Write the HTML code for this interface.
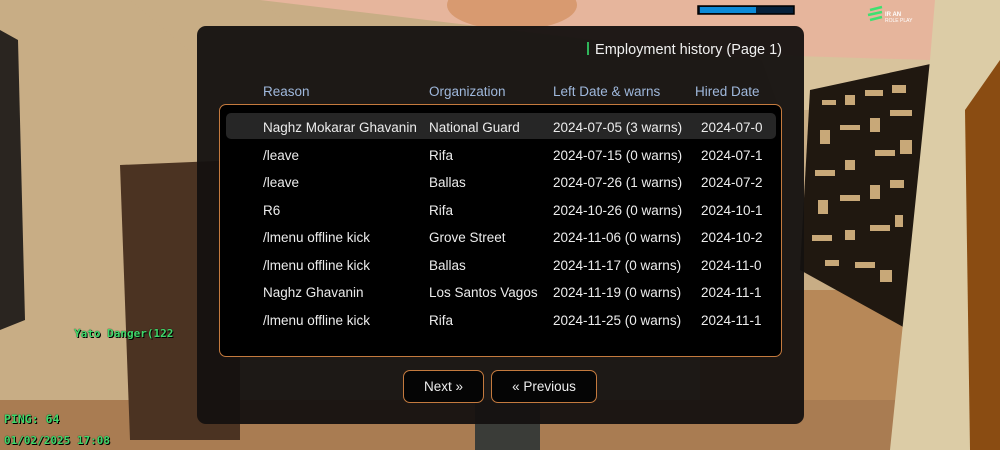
<!DOCTYPE html>
<html><head><style>
*{margin:0;padding:0;box-sizing:border-box}
body{width:1000px;height:450px;overflow:hidden;position:relative;font-family:"Liberation Sans",sans-serif;background:#c8ad85}
.a{position:absolute}
.panel{left:197px;top:26px;width:607px;height:398px;background:rgba(20,17,16,0.95);border-radius:9px}
.title{right:22px;top:16px;color:#f0f0f0;font-size:14.5px;font-weight:500}
.title b{display:inline-block;width:2px;height:13px;background:#2fb55a;margin-right:6px;vertical-align:-1px}
.h{top:58px;color:#9fb8dc;font-size:13.5px}
.box{left:22px;top:78px;width:563px;height:253px;background:#000;border:1.5px solid #c47a3e;border-radius:7px;overflow:hidden}
.hl{left:6px;top:8px;width:550px;height:26px;background:#262626;border-radius:5px}
.r{color:#ececec;font-size:13.5px;white-space:nowrap}
.btn{top:344px;height:33px;border:1.5px solid #c47a3e;border-radius:7px;background:#050505;color:#eee;font-size:13.5px;text-align:center;line-height:31px}
.g{color:#3fd86a;font-family:"DejaVu Sans Mono",monospace;font-weight:bold;font-size:11px;text-shadow:0 0 1px #000,1px 1px 0 #000}
</style></head><body>
<svg class="a" style="left:0;top:0" width="1000" height="450">
<polygon points="260,0 1000,0 1000,70 880,90 760,60" fill="#e6b59c"/>
<polygon points="130,0 260,0 330,60 200,60" fill="#c8ad85"/>
<polygon points="760,55 930,60 930,110 780,110" fill="#d8c39c"/>
<rect x="700" y="290" width="240" height="160" fill="#b78858"/>
<rect x="0" y="400" width="1000" height="50" fill="#a97c52"/>
<polygon points="0,30 18,40 25,320 0,330" fill="#2a2520"/>
<polygon points="120,165 240,160 240,440 130,440" fill="#4b3322"/>
<polygon points="810,90 935,63 905,328 800,270" fill="#201810"/>
<g fill="#c8a878">
<rect x="822" y="100" width="14" height="5"/><rect x="845" y="95" width="10" height="10"/><rect x="865" y="90" width="18" height="6"/><rect x="892" y="85" width="14" height="8"/>
<rect x="820" y="130" width="10" height="14"/><rect x="840" y="125" width="20" height="5"/><rect x="870" y="118" width="10" height="14"/><rect x="890" y="110" width="22" height="6"/>
<rect x="815" y="170" width="20" height="6"/><rect x="845" y="160" width="10" height="10"/><rect x="875" y="150" width="20" height="6"/><rect x="900" y="140" width="12" height="14"/>
<rect x="818" y="200" width="10" height="14"/><rect x="840" y="195" width="20" height="6"/><rect x="870" y="185" width="10" height="14"/><rect x="890" y="180" width="14" height="8"/>
<rect x="812" y="235" width="20" height="6"/><rect x="845" y="230" width="10" height="10"/><rect x="870" y="225" width="20" height="6"/><rect x="895" y="215" width="8" height="12"/>
<rect x="825" y="260" width="14" height="6"/><rect x="855" y="262" width="20" height="6"/><rect x="880" y="270" width="12" height="12"/>
</g>
<polygon points="935,0 1000,0 1000,450 890,450 930,60" fill="#dccca6"/>
<polygon points="965,110 1000,60 1000,450 970,450" fill="#8a4c12"/>
<rect x="698" y="6" width="96" height="8" fill="#05203a" stroke="#000" stroke-width="1.5"/>
<rect x="700" y="7" width="56" height="6" fill="#0a8ad8"/>
<path d="M870 10 l12 -3 M868 15 l14 -3 M870 20 l12 -3" stroke="#3fe070" stroke-width="2.5"/>
<text x="885" y="16" font-size="6" fill="#fff" font-family="Liberation Sans" font-weight="bold">IR AN</text>
<text x="885" y="22" font-size="5" fill="#fff" font-family="Liberation Sans">ROLE PLAY</text>
<ellipse cx="512" cy="5" rx="65" ry="25" fill="#d89a70"/>
<rect x="475" y="400" width="65" height="50" fill="#3a3c38"/>
</svg>
<div class="a panel">
<div class="a title"><b></b>Employment history (Page 1)</div>
<div class="a h" style="left:66px">Reason</div>
<div class="a h" style="left:232px">Organization</div>
<div class="a h" style="left:356px">Left Date &amp; warns</div>
<div class="a h" style="left:498px">Hired Date</div>
<div class="a box">
<div class="a hl"></div>
<div class="a" style="left:0;top:0;width:542px;height:250px;overflow:hidden">
<div class="a r" style="left:43px;top:9px;line-height:27.5px">Naghz Mokarar Ghavanin<br>/leave<br>/leave<br>R6<br>/lmenu offline kick<br>/lmenu offline kick<br>Naghz Ghavanin<br>/lmenu offline kick</div>
<div class="a r" style="left:209px;top:9px;line-height:27.5px">National Guard<br>Rifa<br>Ballas<br>Rifa<br>Grove Street<br>Ballas<br>Los Santos Vagos<br>Rifa</div>
<div class="a r" style="left:333px;top:9px;line-height:27.5px">2024-07-05 (3 warns)<br>2024-07-15 (0 warns)<br>2024-07-26 (1 warns)<br>2024-10-26 (0 warns)<br>2024-11-06 (0 warns)<br>2024-11-17 (0 warns)<br>2024-11-19 (0 warns)<br>2024-11-25 (0 warns)</div>
<div class="a r" style="left:481px;top:9px;line-height:27.5px">2024-07-05<br>2024-07-11<br>2024-07-20<br>2024-10-10<br>2024-10-20<br>2024-11-01<br>2024-11-17<br>2024-11-19</div>
</div>
</div>
<div class="a btn" style="left:206px;width:81px">Next »</div>
<div class="a btn" style="left:294px;width:106px">« Previous</div>
</div>
<div class="a g" style="left:74px;top:327px">Yato Danger(122</div>
<div class="a g" style="left:4px;top:412px;font-size:11.5px">PING: 64</div>
<div class="a g" style="left:4px;top:434px">01/02/2025 17:08</div>
</body></html>
